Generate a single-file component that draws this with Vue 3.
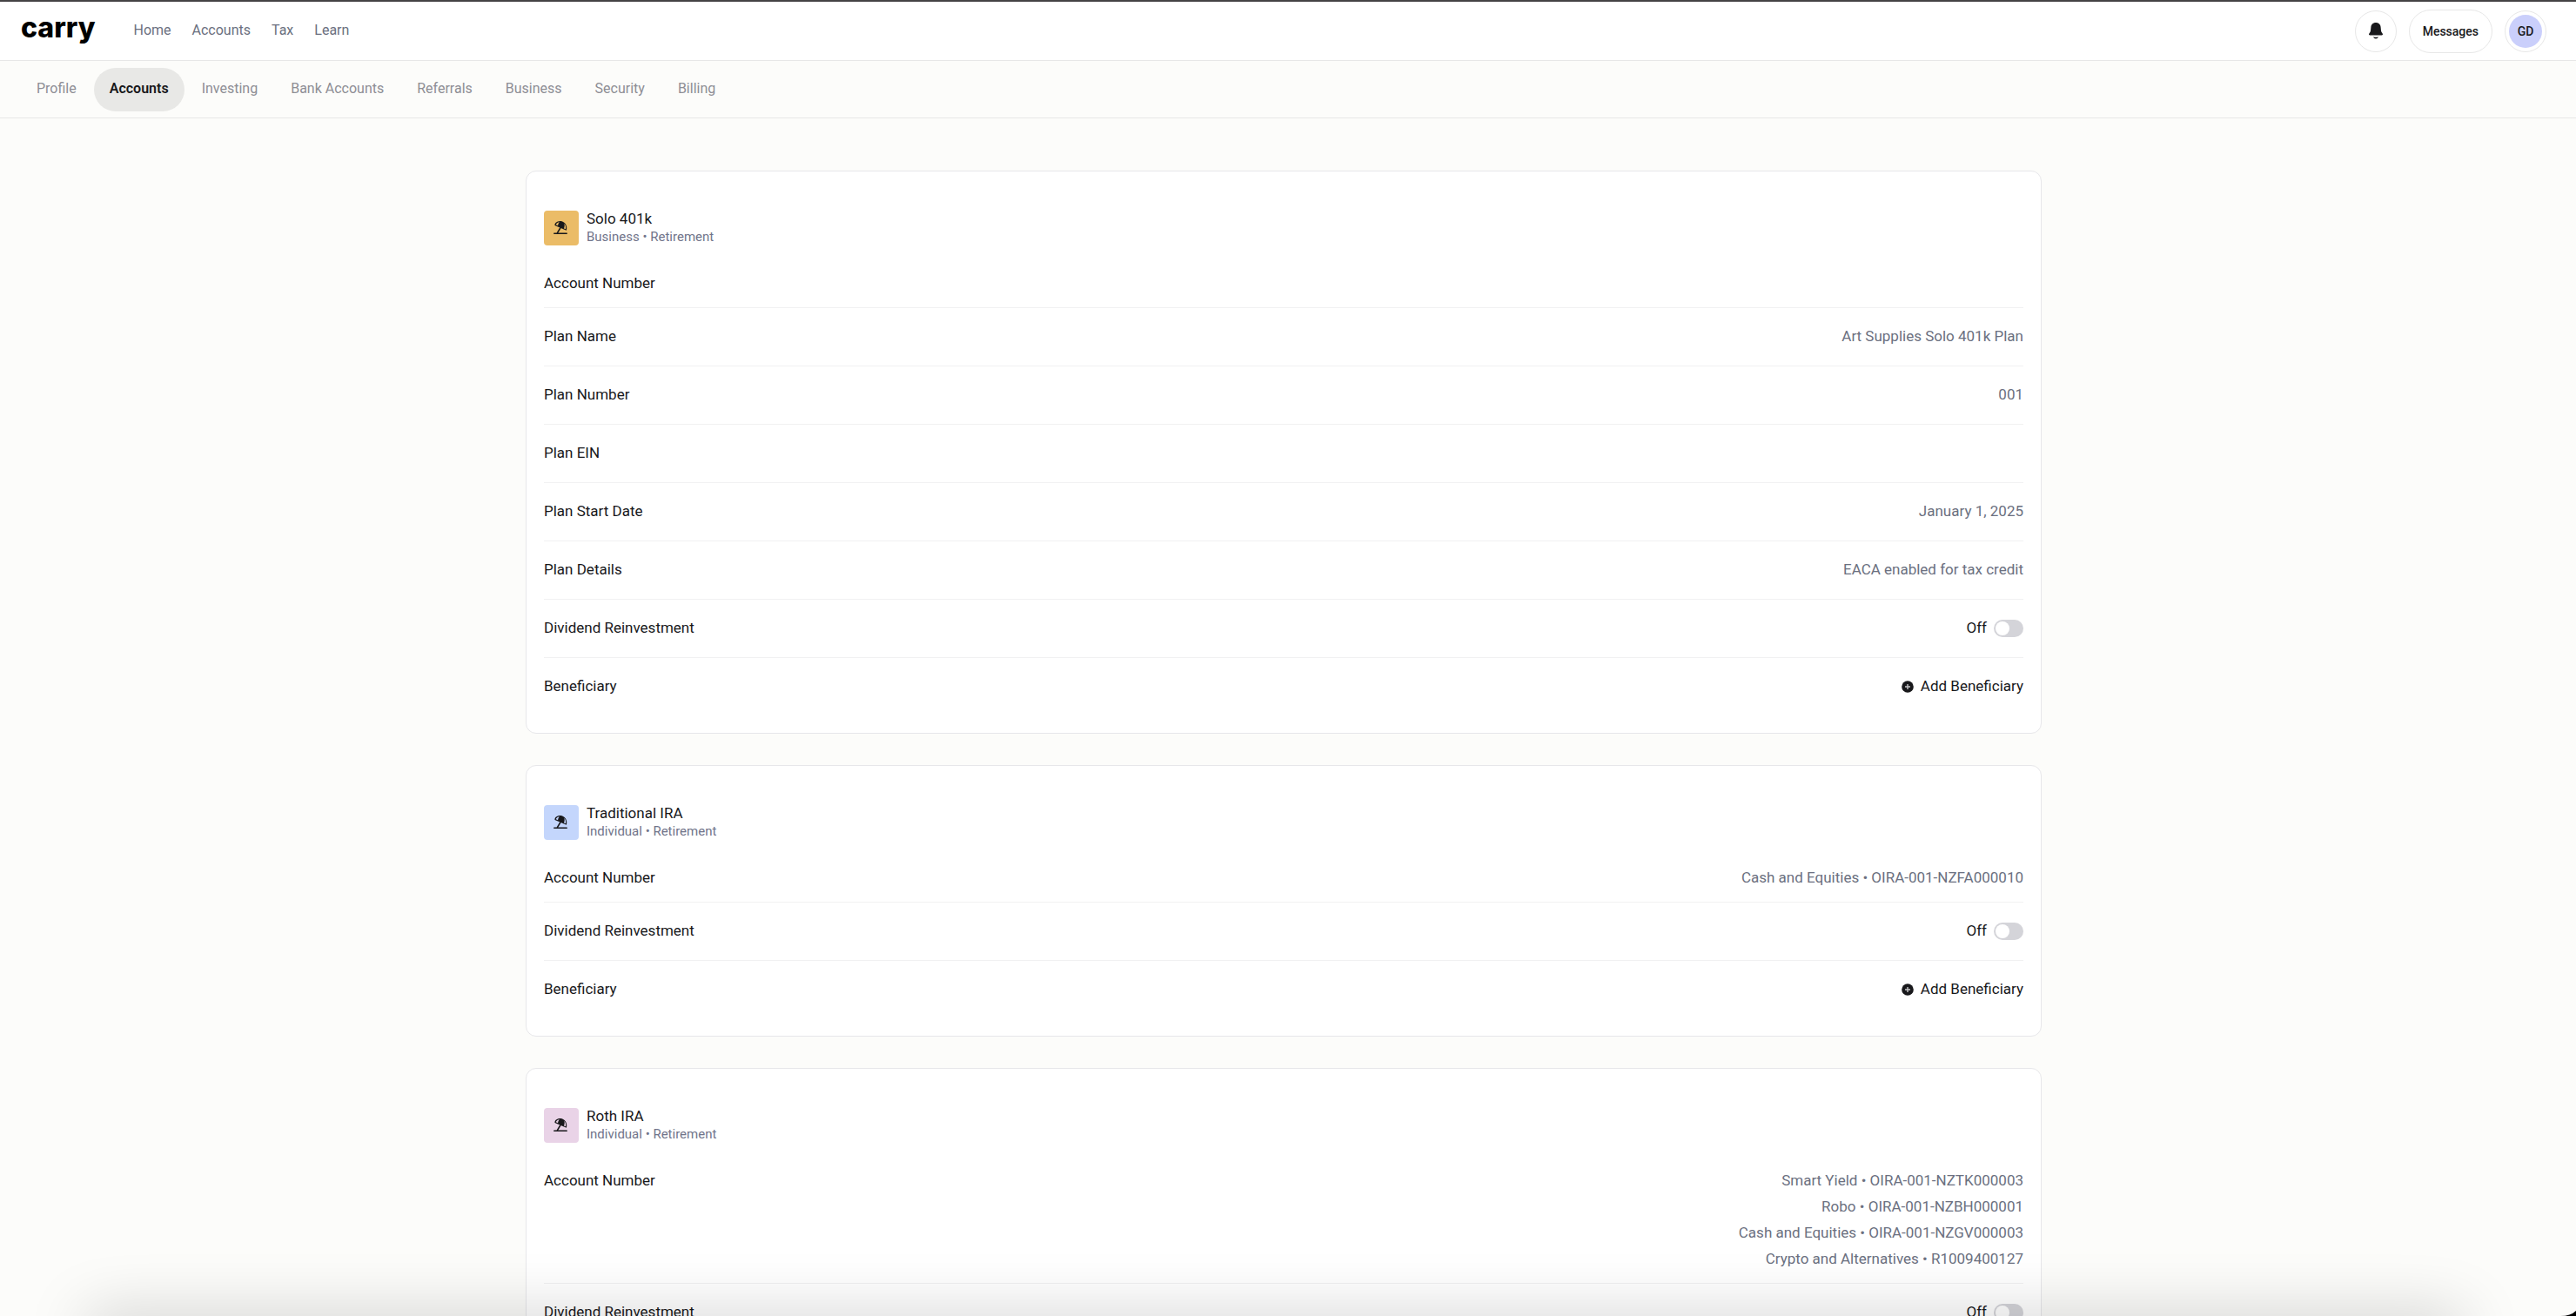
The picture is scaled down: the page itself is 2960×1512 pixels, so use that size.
<script setup>
import { reactive } from 'vue'

const mainLinks = ['Home', 'Accounts', 'Tax', 'Learn']
const tabs = ['Profile', 'Accounts', 'Investing', 'Bank Accounts', 'Referrals', 'Business', 'Security', 'Billing']
const activeTab = 'Accounts'

const accounts = reactive([
  {
    id: 'solo',
    name: 'Solo 401k',
    kind: 'Business • Retirement',
    tone: 'amber',
    numbers: [],
    details: [
      { label: 'Plan Name', value: 'Art Supplies Solo 401k Plan' },
      { label: 'Plan Number', value: '001' },
      { label: 'Plan EIN', value: '' },
      { label: 'Plan Start Date', value: 'January 1, 2025' },
      { label: 'Plan Details', value: 'EACA enabled for tax credit' }
    ],
    reinvest: false
  },
  {
    id: 'traditional',
    name: 'Traditional IRA',
    kind: 'Individual • Retirement',
    tone: 'blue',
    numbers: ['Cash and Equities • OIRA-001-NZFA000010'],
    details: [],
    reinvest: false
  },
  {
    id: 'roth',
    name: 'Roth IRA',
    kind: 'Individual • Retirement',
    tone: 'pink',
    numbers: [
      'Smart Yield • OIRA-001-NZTK000003',
      'Robo • OIRA-001-NZBH000001',
      'Cash and Equities • OIRA-001-NZGV000003',
      'Crypto and Alternatives • R1009400127'
    ],
    details: [],
    reinvest: false
  }
])
</script>

<template>
  <div class="shell">
    <header class="topbar">
      <a class="logo" href="#">carry</a>
      <nav class="main-nav" aria-label="Main">
        <a v-for="link in mainLinks" :key="link" href="#">{{ link }}</a>
      </nav>
      <div class="actions">
        <button class="round" type="button" aria-label="Notifications">
          <svg width="16" height="19" viewBox="0 0 16 19" fill="currentColor" aria-hidden="true">
            <path d="M8 0C4.700 0 2.700 2.200 2.400 5.200L2 9.300C1.900 10.300 1.400 11.100.7 12 .1 12.800-.2 13.500.2 14.100.4 14.400.8 14.500 1.300 14.500H14.700C15.200 14.500 15.600 14.400 15.800 14.100 16.200 13.500 15.900 12.800 15.300 12 14.600 11.100 14.100 10.300 14 9.300L13.600 5.200C13.300 2.200 11.300 0 8 0Z" />
            <path d="M5 16.200Q8 17.400 11 16.200Q10.300 18.500 8 18.500Q5.700 18.500 5 16.200Z" />
          </svg>
        </button>
        <button class="messages" type="button">Messages</button>
        <button class="round" type="button" aria-label="Profile menu">
          <span class="avatar">GD</span>
        </button>
      </div>
    </header>

    <nav class="tabs" aria-label="Settings">
      <a v-for="tab in tabs" :key="tab" href="#" :class="{ active: tab === activeTab }">{{ tab }}</a>
    </nav>

    <main class="content">
      <section v-for="account in accounts" :key="account.id" class="card">
        <div class="card-head">
          <span class="badge" :class="account.tone">
            <svg width="16" height="16" viewBox="0 0 16 16" aria-hidden="true">
              <path d="M.8 15.200H15.200" stroke="#18181b" stroke-width="1.500" stroke-linecap="round" />
              <path d="M4.200 15 8.400 8" stroke="#18181b" stroke-width="1.500" />
              <path d="M1.500 6C.8 2.500 6 .2 9.500 1.200 14 2.500 16.200 7 14.800 11.800Z" fill="#18181b" />
              <path d="M2.800 5.200C3 3.600 5 2.400 7 2.200 5.800 3.200 5.300 4.600 5.100 6.200Z" class="panel" />
              <path d="M12 9.400C12.800 7.600 12.900 5.600 12.300 3.800 14 5.600 14.500 8 13.900 10.300Z" class="panel" />
            </svg>
          </span>
          <div>
            <h2>{{ account.name }}</h2>
            <p>{{ account.kind }}</p>
          </div>
        </div>

        <dl>
          <div class="row numbers">
            <dt>Account Number</dt>
            <dd>
              <span v-for="number in account.numbers" :key="number">{{ number }}</span>
            </dd>
          </div>
          <div v-for="item in account.details" :key="item.label" class="row">
            <dt>{{ item.label }}</dt>
            <dd>{{ item.value }}</dd>
          </div>
          <div class="row">
            <dt>Dividend Reinvestment</dt>
            <dd>
              <label class="switch" :for="`reinvest-${account.id}`">
                {{ account.reinvest ? 'On' : 'Off' }}
                <input :id="`reinvest-${account.id}`" v-model="account.reinvest" type="checkbox" role="switch" />
              </label>
            </dd>
          </div>
          <div class="row">
            <dt>Beneficiary</dt>
            <dd>
              <button class="add" type="button">
                <svg width="14" height="14" viewBox="0 0 14 14" aria-hidden="true">
                  <circle cx="7" cy="7" r="6.800" fill="#18181b" />
                  <path d="M7 4V10M4 7H10" stroke="#c4c4c6" stroke-width="1.400" />
                </svg>
                Add Beneficiary
              </button>
            </dd>
          </div>
        </dl>
      </section>
    </main>

    <div class="dock-shadow" aria-hidden="true"></div>
    <svg class="corner" width="18" height="6" viewBox="0 0 18 6" aria-hidden="true">
      <path d="M0 6Q12 6 18 0V6Z" />
    </svg>
  </div>
</template>

<style>
body {
  margin: 0;
  background: #fcfcfa;
}
</style>

<style scoped>
.shell {
  position: relative;
  display: flex;
  flex-direction: column;
  box-sizing: border-box;
  height: 100vh;
  overflow: hidden;
  border-top: 2px solid #444244;
  background: #fcfcfa;
  color: #18181b;
  font-family: Roboto, Inter, sans-serif;
  font-size: 17px;
  line-height: 24px;
}

a {
  color: inherit;
  text-decoration: none;
}

button {
  padding: 0;
  border: 0;
  background: none;
  color: inherit;
  font: inherit;
  cursor: pointer;
}

.topbar {
  display: flex;
  align-items: center;
  box-sizing: border-box;
  height: 68px;
  padding: 0 34px 0 24px;
  border-bottom: 1px solid #e7e7e7;
  background: #fff;
}

.logo {
  padding-bottom: 8px;
  color: #000;
  font-family: Inter, sans-serif;
  font-size: 32px;
  font-weight: 800;
  line-height: 40px;
}

.main-nav {
  display: flex;
  gap: 24px;
  margin-left: 44px;
  padding-bottom: 2px;
  color: #6b7080;
  font-size: 16px;
}

.actions {
  display: flex;
  align-items: center;
  gap: 14px;
  margin-left: auto;
  font-size: 14px;
  font-weight: 500;
}

.round {
  display: grid;
  place-items: center;
  box-sizing: border-box;
  width: 48px;
  height: 48px;
  border: 1px solid #e7e7e7;
  border-radius: 50%;
}

.messages {
  height: 50px;
  padding: 0 15px;
  border: 1px solid #e7e7e7;
  border-radius: 25px;
}

.avatar {
  display: grid;
  place-items: center;
  width: 38px;
  height: 38px;
  border-radius: 50%;
  background: #cacffb;
}

.tabs {
  display: flex;
  align-items: center;
  gap: 2px;
  box-sizing: border-box;
  height: 66px;
  padding: 0 24px;
  border-bottom: 1px solid #e7e7e7;
  color: #8e8e95;
  font-size: 16px;
}

.tabs a {
  padding: 12px 18px 14px;
  border-radius: 25px;
}

.tabs .active {
  background: #e8e8e6;
  color: #18181b;
  font-weight: 600;
}

.content {
  display: flex;
  flex: 1;
  flex-direction: column;
  align-items: center;
  gap: 36px;
  min-height: 0;
  padding: 60px 10px 60px 0;
  overflow-y: auto;
  scrollbar-width: none;
}

.card {
  flex: none;
  box-sizing: border-box;
  width: 100%;
  max-width: 1742px;
  padding: 20px;
  border: 1px solid #e7e7ea;
  border-radius: 12px;
  background: #fff;
}

.card-head {
  display: flex;
  gap: 9px;
  padding: 25px 0 28px;
}

.badge {
  display: grid;
  place-items: center;
  width: 40px;
  height: 40px;
  border-radius: 4px;
}

.badge svg {
  padding: 0 3px 3px 0;
}

.amber {
  background: #ebbc67;
}

.blue {
  background: #c4d6fc;
}

.pink {
  background: #e9d3e7;
}

.amber .panel {
  fill: #ebbc67;
}

.blue .panel {
  fill: #c4d6fc;
}

.pink .panel {
  fill: #e9d3e7;
}

h2,
p,
dl,
dd {
  margin: 0;
}

h2 {
  font-size: 17px;
  font-weight: 400;
  line-height: 18px;
}

p {
  padding-top: 2px;
  color: #71748a;
  font-size: 15px;
  line-height: 20px;
}

.row {
  display: flex;
  align-items: center;
  justify-content: space-between;
  height: 66px;
}

.row + .row {
  border-top: 1px solid #f1f1f2;
}

.row.numbers {
  align-items: flex-start;
  height: auto;
  min-height: 30px;
  padding-bottom: 13px;
  line-height: 30px;
}

dt,
dd {
  padding-bottom: 2px;
}

.numbers dt,
.numbers dd {
  padding-bottom: 0;
}

dd {
  color: #6b7080;
  text-align: right;
}

.numbers span {
  display: block;
}

.switch,
.add {
  display: flex;
  align-items: center;
  gap: 8px;
  color: #18181b;
}

.add svg,
.switch input {
  margin: 2px 0 0;
}

.switch input {
  display: flex;
  align-items: center;
  width: 34px;
  height: 20px;
  border-radius: 10px;
  background: #d4d4d9;
  appearance: none;
}

.switch input::before {
  width: 16px;
  height: 16px;
  margin-left: 2px;
  border-radius: 50%;
  background: #fff;
  content: "";
}

.switch input:checked {
  background: #18181b;
}

.switch input:checked::before {
  margin-left: 16px;
}

.dock-shadow {
  position: absolute;
  right: 140px;
  bottom: -20px;
  left: 110px;
  height: 20px;
  box-shadow: 0 10px 70px 10px rgba(0, 0, 0, 0.22);
  pointer-events: none;
}

.corner {
  position: absolute;
  right: 0;
  bottom: 0;
}
</style>
